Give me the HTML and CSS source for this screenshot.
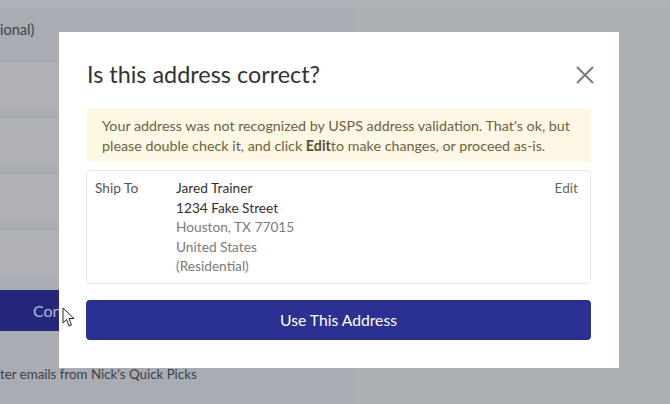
FILE: index.html
```html
<!DOCTYPE html>
<html lang="en">
<head>
    <meta charset="UTF-8">
    <meta name="viewport" content="width=device-width, initial-scale=1.0">
    <title>Checkout - Nick's Quick Picks</title>
    <link rel="stylesheet" href="styles.css">
</head>
<body>
    <div class="page">
        <div class="form-panel">
            <div class="field-label">ional)</div>
            <div class="field"></div>
            <div class="field"></div>
            <div class="field"></div>
            <div class="field"></div>
            <button class="continue-btn">Con</button>
            <div class="newsletter">ter emails from Nick's Quick Picks</div>
        </div>
    </div>

    <div class="modal">
        <div class="modal-header">
            <h2>Is this address correct?</h2>
            <button class="close-btn" aria-label="Close">
                <svg width="20" height="20" viewBox="0 0 20 20">
                    <path d="M2 2 L18 18 M18 2 L2 18" stroke="#7a7a7a" stroke-width="2" fill="none"/>
                </svg>
            </button>
        </div>

        <div class="notice">
            Your address was not recognized by USPS address validation. That's ok, but
            please double check it, and click <b>Edit</b>to make changes, or proceed as-is.
        </div>

        <div class="address-card">
            <div class="address-label">Ship To</div>
            <div class="address-lines">
                <div class="strong">Jared Trainer</div>
                <div class="strong">1234 Fake Street</div>
                <div>Houston, TX 77015</div>
                <div>United States</div>
                <div>(Residential)</div>
            </div>
            <a href="#" class="edit-link">Edit</a>
        </div>

        <button class="use-btn">Use This Address</button>
    </div>

    <svg class="cursor" width="14" height="21" viewBox="0 0 14 21">
        <path d="M1 1 L1 16 L4.5 12.5 L7 19 L9.5 18 L7 11.5 L12 11.5 Z" fill="#fff" stroke="#222" stroke-width="1"/>
    </svg>
</body>
</html>
```

FILE: styles.css
```css
* {
    margin: 0;
    padding: 0;
    box-sizing: border-box;
}

body {
    font-family: Lato, "Noto Sans", sans-serif;
    background: #adb0b5;
    width: 670px;
    height: 404px;
    overflow: hidden;
    position: relative;
}

.page {
    display: flex;
    height: 100%;
    border-top: 7px solid #b0b2b7;
}

.form-panel {
    width: 355px;
    background: #a9acb2;
    padding-top: 14px;
    display: flex;
    flex-direction: column;
}

.field-label {
    font-size: 14.5px;
    color: #404247;
    height: 42px;
}

.field {
    height: 46px;
    background: #afb1b7;
    margin-bottom: 10px;
    border-top: 1px solid #b3b5ba;
}

.continue-btn {
    margin-top: 3px;
    height: 41px;
    border: none;
    background: #24277a;
    color: #b4b7d6;
    font-family: inherit;
    font-size: 16px;
    text-align: left;
    padding-left: 33px;
}

.newsletter {
    margin-top: 35px;
    font-size: 13.3px;
    color: #3d3f44;
}

.modal {
    position: absolute;
    left: 59px;
    top: 32px;
    width: 560px;
    height: 336px;
    background: #fff;
    padding: 28px 28px 28px 27px;
    display: flex;
    flex-direction: column;
}

.modal-header {
    display: flex;
    justify-content: space-between;
    align-items: center;
    height: 28px;
    margin-bottom: 20px;
}

.modal-header h2 {
    font-size: 23.4px;
    font-weight: 400;
    color: #333;
    padding-left: 1px;
}

.close-btn {
    background: none;
    border: none;
    display: flex;
    margin-right: -4px;
    margin-top: 1px;
}

.notice {
    background: #fdf8e5;
    color: #6f6243;
    font-size: 14.3px;
    line-height: 19.5px;
    padding: 8px 16px;
    height: 54px;
    border-radius: 3px;
}

.notice b {
    font-weight: 700;
    color: #5a4e33;
}

.address-card {
    margin-top: 8px;
    border: 1px solid #e6e6e8;
    border-radius: 5px;
    padding: 7px 12px 8px 8px;
    display: flex;
    font-size: 13.7px;
    line-height: 19.5px;
    height: 114px;
}

.address-label {
    width: 81px;
    color: #555;
}

.address-lines {
    flex: 1;
    color: #7b7b7b;
}

.address-lines .strong {
    color: #333;
}

.edit-link {
    color: #666;
    text-decoration: none;
}

.use-btn {
    margin-top: 16px;
    height: 40px;
    border: none;
    border-radius: 4px;
    background: #2b3192;
    color: #fff;
    font-family: inherit;
    font-size: 15.7px;
}

.cursor {
    position: absolute;
    left: 62px;
    top: 307px;
}
```
